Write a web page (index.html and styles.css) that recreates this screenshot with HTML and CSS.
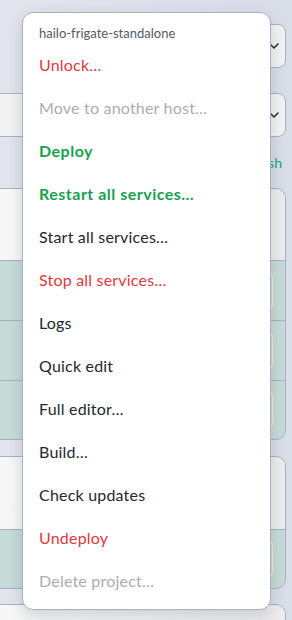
FILE: index.html
```html
<!DOCTYPE html>
<html lang="en">

<head>
  <meta charset="UTF-8" />
  <meta name="viewport" content="width=device-width, initial-scale=1.0" />
  <title>Projects</title>
  <link rel="stylesheet" href="styles.css">
</head>

<body>
  <div class="page">
    <div class="topbar">
      <div class="select select-host">
        <svg class="chevron" width="10" height="6" viewBox="0 0 10 6"><path d="M1 1l4 4 4-4" fill="none" stroke="#2b2f38" stroke-width="1.6" stroke-linecap="round" stroke-linejoin="round"/></svg>
      </div>
    </div>
    <div class="select select-wide">
      <svg class="chevron" width="10" height="6" viewBox="0 0 10 6"><path d="M1 1l4 4 4-4" fill="none" stroke="#2b2f38" stroke-width="1.6" stroke-linecap="round" stroke-linejoin="round"/></svg>
    </div>
    <div class="actions">
      <a class="refresh" href="#">Refresh</a>
    </div>

    <div class="card">
      <div class="card-head"></div>
      <div class="card-row"><span class="field"></span></div>
      <div class="card-row"><span class="field"></span></div>
      <div class="card-row"><span class="field"></span></div>
    </div>
    <div class="card card-short">
      <div class="card-head"></div>
      <div class="card-row"><span class="field"></span></div>
    </div>
    <div class="card card-last">
      <div class="card-head"></div>
    </div>
  </div>

  <!-- project context menu -->
  <div class="menu">
    <div class="menu-title">hailo-frigate-standalone</div>
    <ul class="menu-list">
      <li class="danger">Unlock…</li>
      <li class="disabled">Move to another host…</li>
      <li class="ok">Deploy</li>
      <li class="ok">Restart all services…</li>
      <li>Start all services…</li>
      <li class="danger">Stop all services…</li>
      <li>Logs</li>
      <li>Quick edit</li>
      <li>Full editor…</li>
      <li>Build…</li>
      <li>Check updates</li>
      <li class="danger">Undeploy</li>
      <li class="disabled">Delete project…</li>
    </ul>
  </div>
</body>

</html>
```

FILE: styles.css
```css
* {
  box-sizing: border-box;
}

html,
body {
  height: 100%;
  overflow: hidden;
}

body {
  margin: 0;
  background: linear-gradient(to right, #e2e5ee, #d9dde8);
  font-family: Lato, "Noto Sans", sans-serif;
}

.page {
  height: 100%;
  padding: 24px 6px 0 0;
  overflow: hidden;
}

.topbar {
  display: flex;
  justify-content: flex-end;
  height: 44px;
}

.select {
  display: flex;
  align-items: center;
  justify-content: flex-end;
  height: 44px;
  padding: 0 6px 0 14px;
  background: #f3f3f4;
  border: 1px solid #a9b1c1;
  border-radius: 8px;
}

.select-host {
  width: 180px;
}

.select-wide {
  margin: 25px 0 0 -10px;
}

.chevron {
  display: block;
}

.actions {
  display: flex;
  justify-content: flex-end;
  align-items: center;
  height: 51px;
  padding-right: 4px;
}

.refresh {
  color: #16a58a;
  font-size: 14px;
  text-decoration: none;
}

.card {
  margin-left: -10px;
  margin-bottom: 16px;
  border: 1px solid #a9b1c1;
  border-radius: 10px;
  overflow: hidden;
  background: #c6dcd8;
}

.card-head {
  height: 71px;
  background: linear-gradient(to right, #f8f8f8, #ececec);
}

.card-short {
  margin-bottom: 15px;
}

.card-short .card-head {
  height: 72px;
}

.card-last .card-head {
  height: 60px;
}

.card-row {
  display: flex;
  justify-content: flex-end;
  align-items: center;
  height: 60px;
  padding-right: 12px;
  border-top: 1px solid #a9b1c1;
}

.card-row:last-child {
  height: 59px;
}

.field {
  width: 200px;
  height: 42px;
  border: 1px solid #e6eeec;
  border-radius: 8px;
}

.menu {
  position: absolute;
  left: 22px;
  top: 12px;
  width: 249px;
  padding: 6px 0 7px;
  background: #fff;
  border: 1px solid #a9b1c1;
  border-radius: 11px;
  box-shadow: 0 6px 16px rgba(40, 48, 64, 0.18);
}

.menu-title {
  padding: 6px 16px 2px;
  line-height: 16px;
  color: #555a64;
  font-size: 13px;
}

.menu-list {
  margin: 0;
  padding: 0;
  list-style: none;
}

.menu-list li {
  height: 43px;
  padding: 0 16px;
  line-height: 43px;
  color: #24272e;
  font-size: 16px;
  letter-spacing: 0.2px;
  cursor: pointer;
}

.menu-list li.danger {
  color: #e0393e;
}

.menu-list li.disabled {
  color: #a9adb5;
}

.menu-list li.ok {
  color: #17a250;
  font-weight: 700;
  letter-spacing: 0.5px;
}
```
